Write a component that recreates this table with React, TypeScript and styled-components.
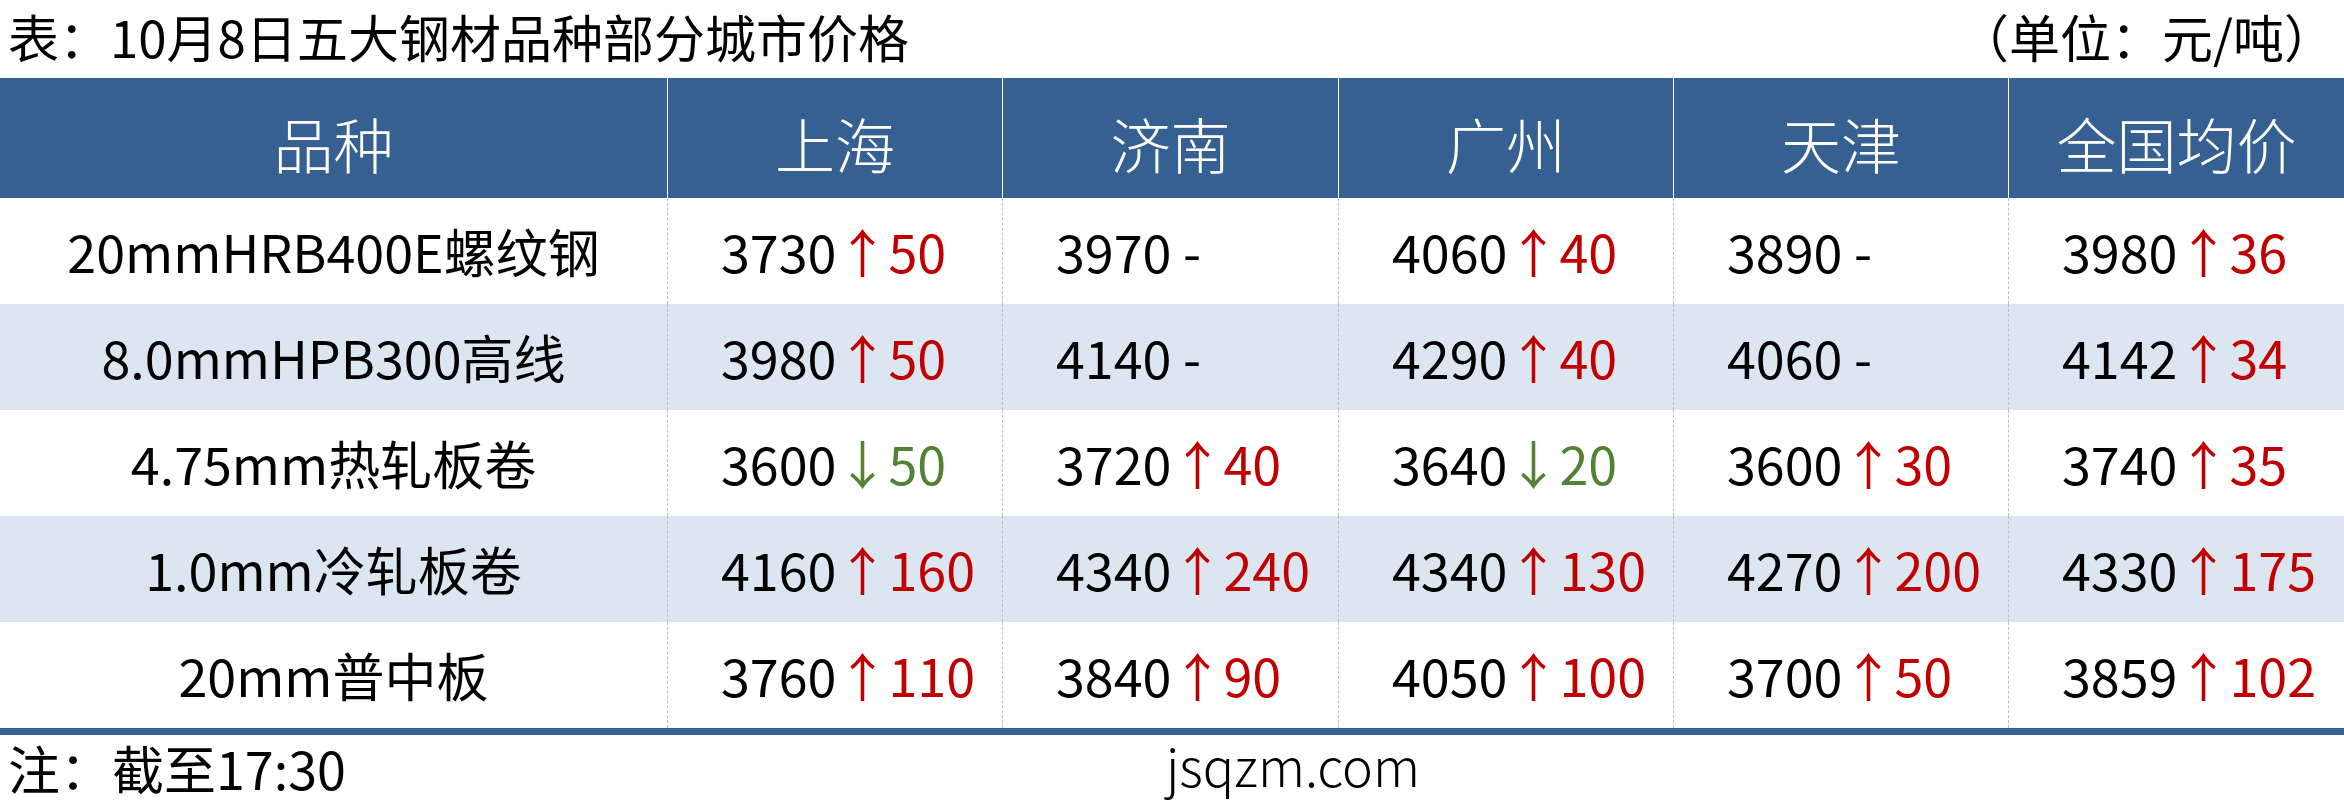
import styled, { createGlobalStyle } from "styled-components";

const GlobalStyle = createGlobalStyle`
  html, body {
    margin: 0;
    padding: 0;
    background: #ffffff;
  }
  body {
    font-family: "Noto Sans CJK SC", "Noto Sans", sans-serif;
  }
`;

const Page = styled.div`
  width: 2344px;
  height: 809px;
  display: flex;
  flex-direction: column;
  background: #ffffff;
  color: #000000;
`;

const TitleBar = styled.div`
  height: 78px;
  box-sizing: border-box;
  display: flex;
  align-items: center;
  justify-content: space-between;
  padding: 0 9px 6px 8px;
  font-size: 51px;
  line-height: 1;
`;

const Table = styled.div`
  display: grid;
  grid-template-columns: 667px 335px 336px 335px 335px 336px;
  grid-auto-rows: 106px;
  grid-template-rows: 120px;
  border-bottom: 7px solid #366092;
`;

const HeadCell = styled.div<{ first?: boolean }>`
  display: flex;
  align-items: center;
  justify-content: center;
  padding-top: 8px;
  box-sizing: border-box;
  background: #366092;
  color: #ffffff;
  font-size: 60px;
  font-weight: 300;
  border-left: ${({ first }) => (first ? "none" : "1px solid #ffffff")};
`;

const Cell = styled.div<{ shaded: boolean; first?: boolean }>`
  display: flex;
  align-items: center;
  justify-content: ${({ first }) => (first ? "center" : "flex-start")};
  padding-left: ${({ first }) => (first ? "0" : "53px")};
  box-sizing: border-box;
  background: ${({ shaded }) => (shaded ? "#dce6f1" : "#ffffff")};
  border-left: ${({ first }) => (first ? "none" : "1px dashed #bfbfbf")};
  font-size: 52px;
  line-height: 1;
  white-space: nowrap;
`;

const Change = styled.span<{ dir: "up" | "down" }>`
  color: ${({ dir }) => (dir === "up" ? "#c00000" : "#548235")};
`;

const Footer = styled.div`
  flex: 1;
  display: grid;
  grid-template-columns: 1166px 1fr;
  align-items: center;
  box-sizing: border-box;
  padding: 0 0 8px 8px;
  font-size: 52px;
  line-height: 1;
`;

const Domain = styled.div`
  margin-left: -8px;
  font-size: 52px;
  font-weight: 300;
  padding-bottom: 6px;
`;

type Quote = [number, "up" | "down" | null, number?];

const cities = ["上海", "济南", "广州", "天津", "全国均价"];

const rows: { name: string; quotes: Quote[] }[] = [
  {
    name: "20mmHRB400E螺纹钢",
    quotes: [[3730, "up", 50], [3970, null], [4060, "up", 40], [3890, null], [3980, "up", 36]],
  },
  {
    name: "8.0mmHPB300高线",
    quotes: [[3980, "up", 50], [4140, null], [4290, "up", 40], [4060, null], [4142, "up", 34]],
  },
  {
    name: "4.75mm热轧板卷",
    quotes: [[3600, "down", 50], [3720, "up", 40], [3640, "down", 20], [3600, "up", 30], [3740, "up", 35]],
  },
  {
    name: "1.0mm冷轧板卷",
    quotes: [[4160, "up", 160], [4340, "up", 240], [4340, "up", 130], [4270, "up", 200], [4330, "up", 175]],
  },
  {
    name: "20mm普中板",
    quotes: [[3760, "up", 110], [3840, "up", 90], [4050, "up", 100], [3700, "up", 50], [3859, "up", 102]],
  },
];

export default function App() {
  return (
    <Page>
      <GlobalStyle />
      <TitleBar>
        <span>表：10月8日五大钢材品种部分城市价格</span>
        <span>（单位：元/吨）</span>
      </TitleBar>
      <Table>
        <HeadCell first>品种</HeadCell>
        {cities.map((c) => (
          <HeadCell key={c}>{c}</HeadCell>
        ))}
        {rows.map((row, i) => {
          const shaded = i % 2 === 1;
          return [
            <Cell key={row.name} shaded={shaded} first>
              {row.name}
            </Cell>,
            ...row.quotes.map(([price, dir, delta], j) => (
              <Cell key={row.name + j} shaded={shaded}>
                {price}
                {dir ? (
                  <Change dir={dir}>
                    {dir === "up" ? "↑" : "↓"}
                    {delta}
                  </Change>
                ) : (
                  " -"
                )}
              </Cell>
            )),
          ];
        })}
      </Table>
      <Footer>
        <span>注：截至17:30</span>
        <Domain>jsqzm.com</Domain>
      </Footer>
    </Page>
  );
}
